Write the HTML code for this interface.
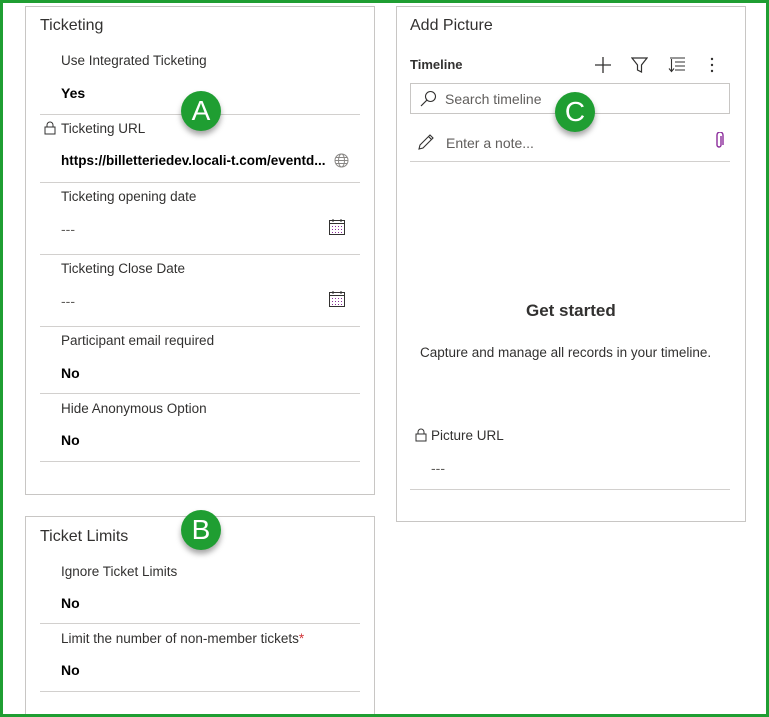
<!DOCTYPE html>
<html><head><meta charset="utf-8"><style>
*{margin:0;padding:0;box-sizing:border-box}
html,body{width:769px;height:717px;overflow:hidden;background:#fff}
body{font-family:"Liberation Sans",sans-serif;color:#323130;position:relative}
.frame{position:absolute;left:0;top:0;width:769px;height:717px;border:3px solid #1f9e32;z-index:10;pointer-events:none}
.card{position:absolute;border:1px solid #c8c6c4;background:#fff}
.t{position:absolute;white-space:nowrap}
.h{font-size:16px;color:#323130}
.lb{font-size:13.5px;color:#323130}
.v{font-size:14px;font-weight:bold;color:#000}
.sep{position:absolute;height:1px;background:#d2d0ce}
.dash{font-size:14px;color:#605e5c}
.badge{position:absolute;width:40px;height:40px;border-radius:50%;background:#1f9e32;color:#fff;font-size:28px;text-align:center;line-height:40px;box-shadow:0 4px 6px rgba(0,0,0,.35);z-index:5}
svg{position:absolute}
</style></head><body>
<div class="frame"></div>

<div class="card" style="left:25px;top:6px;width:350px;height:489px"></div>
<div class="card" style="left:25px;top:516px;width:350px;height:220px"></div>
<div class="card" style="left:396px;top:6px;width:350px;height:516px"></div>

<!-- Left card -->
<div class="t h" style="left:40px;top:17px">Ticketing</div>
<div class="t lb" style="left:61px;top:53px">Use Integrated Ticketing</div>
<div class="t v" style="left:61px;top:85px">Yes</div>
<div class="sep" style="left:40px;top:114px;width:320px"></div>
<svg style="left:44px;top:121px" width="12" height="14" viewBox="0 0 12 14"><rect x="1" y="6" width="10" height="7" fill="none" stroke="#323130"/><path d="M3 6V4a3 3 0 0 1 6 0v2" fill="none" stroke="#323130"/></svg>
<div class="t lb" style="left:61px;top:121px">Ticketing URL</div>
<div class="t v" style="left:61px;top:153px;font-size:13.5px">https://billetteriedev.locali-t.com/eventd...</div>
<svg style="left:334px;top:153px" width="15" height="15" viewBox="0 0 15 15"><g fill="none" stroke="#8a8886"><circle cx="7.5" cy="7.5" r="6.5"/><ellipse cx="7.5" cy="7.5" rx="3" ry="6.5"/><path d="M1 7.5h13M2 4.5h11M2 10.5h11"/></g></svg>
<div class="sep" style="left:40px;top:182px;width:320px"></div>
<div class="t lb" style="left:61px;top:189px">Ticketing opening date</div>
<div class="t dash" style="left:61px;top:221px">---</div>
<svg style="left:329px;top:219px" width="16" height="16" viewBox="0 0 16 16"><rect x="0.5" y="1.5" width="15" height="14" fill="none" stroke="#323130"/><path d="M0.5 4.5h15M4 0v3M12 0v3" stroke="#323130"/><g fill="#8b2c9b"><rect x="3" y="7" width="1" height="1"/><rect x="6" y="7" width="1" height="1"/><rect x="9" y="7" width="1" height="1"/><rect x="12" y="7" width="1" height="1"/><rect x="3" y="10" width="1" height="1"/><rect x="6" y="10" width="1" height="1"/><rect x="9" y="10" width="1" height="1"/><rect x="12" y="10" width="1" height="1"/><rect x="3" y="13" width="1" height="1"/><rect x="6" y="13" width="1" height="1"/><rect x="9" y="13" width="1" height="1"/><rect x="12" y="13" width="1" height="1"/></g></svg>
<div class="sep" style="left:40px;top:254px;width:320px"></div>
<div class="t lb" style="left:61px;top:261px">Ticketing Close Date</div>
<div class="t dash" style="left:61px;top:293px">---</div>
<svg style="left:329px;top:291px" width="16" height="16" viewBox="0 0 16 16"><rect x="0.5" y="1.5" width="15" height="14" fill="none" stroke="#323130"/><path d="M0.5 4.5h15M4 0v3M12 0v3" stroke="#323130"/><g fill="#8b2c9b"><rect x="3" y="7" width="1" height="1"/><rect x="6" y="7" width="1" height="1"/><rect x="9" y="7" width="1" height="1"/><rect x="12" y="7" width="1" height="1"/><rect x="3" y="10" width="1" height="1"/><rect x="6" y="10" width="1" height="1"/><rect x="9" y="10" width="1" height="1"/><rect x="12" y="10" width="1" height="1"/><rect x="3" y="13" width="1" height="1"/><rect x="6" y="13" width="1" height="1"/><rect x="9" y="13" width="1" height="1"/><rect x="12" y="13" width="1" height="1"/></g></svg>
<div class="sep" style="left:40px;top:326px;width:320px"></div>
<div class="t lb" style="left:61px;top:333px">Participant email required</div>
<div class="t v" style="left:61px;top:365px">No</div>
<div class="sep" style="left:40px;top:393px;width:320px"></div>
<div class="t lb" style="left:61px;top:401px">Hide Anonymous Option</div>
<div class="t v" style="left:61px;top:432px">No</div>
<div class="sep" style="left:40px;top:461px;width:320px"></div>

<!-- Ticket limits -->
<div class="t h" style="left:40px;top:528px">Ticket Limits</div>
<div class="t lb" style="left:61px;top:564px">Ignore Ticket Limits</div>
<div class="t v" style="left:61px;top:595px">No</div>
<div class="sep" style="left:40px;top:623px;width:320px"></div>
<div class="t lb" style="left:61px;top:631px">Limit the number of non-member tickets<span style="color:#d13438">*</span></div>
<div class="t v" style="left:61px;top:662px">No</div>
<div class="sep" style="left:40px;top:691px;width:320px"></div>

<!-- Right card -->
<div class="t h" style="left:410px;top:17px">Add Picture</div>
<div class="t" style="left:410px;top:57px;font-size:13px;font-weight:bold">Timeline</div>
<svg style="left:595px;top:57px" width="16" height="16" viewBox="0 0 16 16"><path d="M8 0v16M0 8h16" stroke="#323130" stroke-width="1.3"/></svg>
<svg style="left:631px;top:57px" width="17" height="16" viewBox="0 0 17 16"><path d="M1 1h15l-5.5 7v7l-4-2V8z" fill="none" stroke="#323130" stroke-width="1.2"/></svg>
<svg style="left:668px;top:57px" width="17" height="16" viewBox="0 0 17 16"><path d="M2 1h15M7 5h10M7 9h10M7 13h10M3.5 2v12M1 11.5l2.5 3 2.5-3" fill="none" stroke="#323130" stroke-width="1.1"/></svg>
<svg style="left:709px;top:57px" width="6" height="16" viewBox="0 0 6 16"><circle cx="3" cy="2" r="1.2" fill="#323130"/><circle cx="3" cy="8" r="1.2" fill="#323130"/><circle cx="3" cy="14" r="1.2" fill="#323130"/></svg>
<div style="position:absolute;left:410px;top:83px;width:320px;height:31px;border:1px solid #c8c6c4"></div>
<svg style="left:420px;top:90px" width="17" height="17" viewBox="0 0 17 17"><circle cx="10.5" cy="6.5" r="5" fill="none" stroke="#323130" stroke-width="1.1"/><path d="M7 10l-6 6" stroke="#323130" stroke-width="1.2"/></svg>
<div class="t" style="left:445px;top:91px;font-size:14px;color:#605e5c">Search timeline</div>
<svg style="left:418px;top:133px" width="17" height="17" viewBox="0 0 17 17"><path d="M1 16l1-4L12 2l3 3L5 15z M10.5 3.5l3 3" fill="none" stroke="#323130" stroke-width="1.1"/></svg>
<div class="t" style="left:446px;top:135px;font-size:14px;color:#605e5c">Enter a note...</div>
<svg style="left:714px;top:132px" width="10" height="18" viewBox="0 0 10 18"><path d="M7 4v9a2 2 0 0 1-4 0V3a3 3 0 0 1 6 0v10" fill="none" stroke="#8b2c9b" stroke-width="1.4"/></svg>
<div class="sep" style="left:410px;top:161px;width:320px"></div>
<div class="t" style="left:526px;top:301px;font-size:17px;font-weight:bold;color:#323130">Get started</div>
<div class="t" style="left:420px;top:345px;font-size:13.5px;color:#323130">Capture and manage all records in your timeline.</div>
<svg style="left:415px;top:428px" width="12" height="14" viewBox="0 0 12 14"><rect x="1" y="6" width="10" height="7" fill="none" stroke="#323130"/><path d="M3 6V4a3 3 0 0 1 6 0v2" fill="none" stroke="#323130"/></svg>
<div class="t lb" style="left:431px;top:428px">Picture URL</div>
<div class="t dash" style="left:431px;top:460px">---</div>
<div class="sep" style="left:410px;top:489px;width:320px"></div>

<div class="badge" style="left:181px;top:91px">A</div>
<div class="badge" style="left:181px;top:510px">B</div>
<div class="badge" style="left:555px;top:92px">C</div>
</body></html>
